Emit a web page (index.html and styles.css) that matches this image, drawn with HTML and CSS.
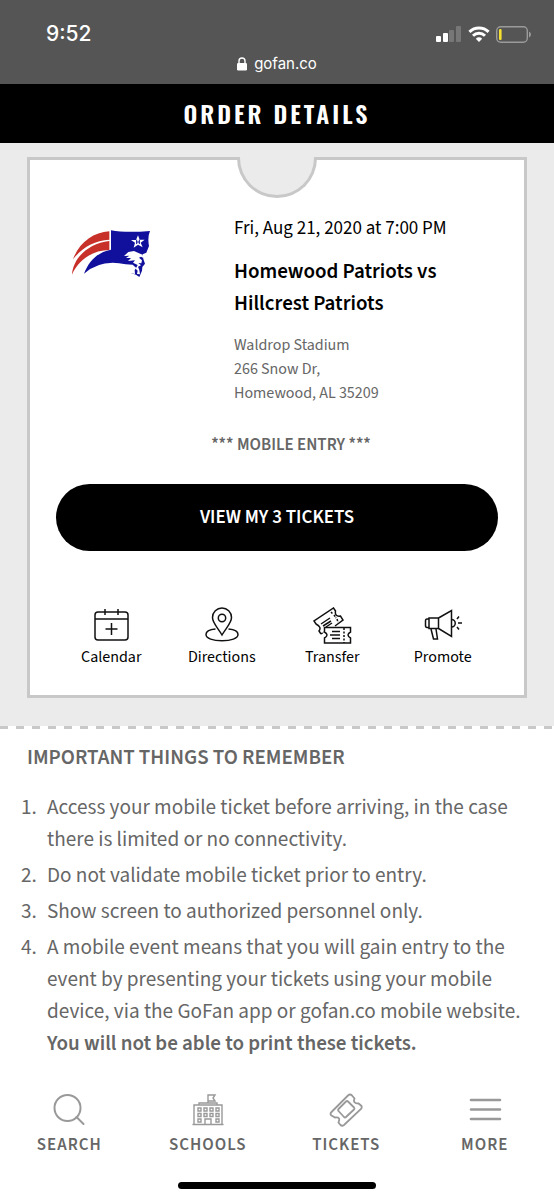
FILE: index.html
```html
<!doctype html>
<html lang="en">

<head>
  <meta charset="UTF-8">
  <meta name="viewport" content="width=device-width, initial-scale=1">
  <title>Order Details</title>
  <link rel="stylesheet" href="styles.css">
</head>

<body>

  <div class="browser">
    <div class="status">
      <span class="time">9:52</span>
      <div class="signals">
        <svg width="26" height="16" viewBox="0 0 26 16">
          <rect x="0" y="10" width="5" height="6" rx="1" fill="#fff"/>
          <rect x="7" y="7" width="5" height="9" rx="1" fill="#fff"/>
          <rect x="13" y="4" width="5" height="12" rx="1" fill="#777"/>
          <rect x="20" y="0" width="5" height="16" rx="1" fill="#777"/>
        </svg>
        <svg width="22" height="16" viewBox="0 0 22 16" fill="none" stroke="#fff" stroke-width="3">
          <path d="M1.4 5.9a13.8 13.8 0 0 1 19.2 0"/>
          <path d="M5 9.8a8.6 8.6 0 0 1 12 0"/>
          <path d="M11 16l-3.2-3.3a4.7 4.7 0 0 1 6.4 0z" fill="#fff" stroke="none"/>
        </svg>
        <svg width="35" height="17" viewBox="0 0 35 17">
          <rect x="0.7" y="0.7" width="30.6" height="15.6" rx="4" fill="none" stroke="#9b9b9b" stroke-width="1.4"/>
          <rect x="3" y="3" width="2.6" height="11" rx="1" fill="#f5e030"/>
          <path d="M33 5.500q2 1 2 3t-2 3z" fill="#9b9b9b"/>
        </svg>
      </div>
    </div>
    <div class="address-bar">
      <svg width="10" height="14" viewBox="0 0 10 14">
        <rect x="0" y="6" width="10" height="7.500" rx="1.300" fill="#fff"/>
        <path d="M2 7V4a3 3 0 0 1 6 0v3" fill="none" stroke="#fff" stroke-width="1.400"/>
      </svg>
      <span>gofan.co</span>
    </div>
  </div>

  <header class="page-title">
    <h1>ORDER DETAILS</h1>
  </header>

  <main>
    <section class="order">
      <div class="card">
        <div class="notch"></div>

        <div class="event">
          <!-- team logo -->
          <svg class="logo" width="80" height="50" viewBox="36 41 240 150">
            <path d="M42 132C60 82 102 51 151 48V73C105 76 70 96 42 132z" fill="#c8302a"/>
            <path d="M39 178C42 128 88 84 151 77V104C101 104 58 134 39 178z" fill="#c8302a"/>
            <path d="M156 45Q200 53 273 47Q265 65 270 92L262 112L251 117L253 131L258 145L250 155L249 166L241 185L231 178L216 173L223 160L200 147Q126 130 75 175C92 132 119 110 156 103z" fill="#10109c"/>
            <path d="M195 122L208 110L225 107L240 114L251 118L253 128L246 124L240 127L249 135L247 144L238 143L246 150L237 154L241 164L243 177L234 176L236 166L230 160L236 149L222 142L228 135L207 137L216 128L201 128L211 121z" fill="#fff"/>
            <path d="M200 147L221 148L232 158L227 164L228 176L210 172L208 155z" fill="#fff"/>
            <path d="M237 60l5 13 15 0-12 9 6 14-14-8-13 9 4-15-12-8h15z" fill="#fff"/>
            <path d="M233 73v13M241 73v13M233 80h8" stroke="#10109c" stroke-width="3"/>
          </svg>
          <div class="details">
            <p class="date">Fri, Aug 21, 2020 at 7:00 PM</p>
            <h2>Homewood Patriots vs Hillcrest Patriots</h2>
            <address>Waldrop Stadium<br>266 Snow Dr,<br>Homewood, AL 35209</address>
          </div>
        </div>

        <p class="entry">*** MOBILE ENTRY ***</p>

        <button type="button" class="view-tickets">VIEW MY 3 TICKETS</button>

        <div class="actions">
          <a href="#">
            <svg width="36" height="38" viewBox="-1 0 36 38">
              <rect x="1" y="5" width="33" height="28" rx="3"/>
              <path d="M1 12h33M11 2v6M24 2v6M17.500 16v12M11.500 22h12"/>
            </svg>
            <span>Calendar</span>
          </a>
          <a href="#">
            <svg width="36" height="38" viewBox="0 0 36 38">
              <path d="M18 28C14 21 8.500 16 8.500 10.500a9.500 9.500 0 0 1 19 0C27.500 16 22 21 18 28z"/>
              <circle cx="18" cy="11" r="3.700"/>
              <path d="M11.500 22C6 22.500 2 24.500 2 27.500c0 4 7 6.200 16 6.200s16-2.200 16-6.200c0-3-4-5-9.500-5.500"/>
            </svg>
            <span>Directions</span>
          </a>
          <a href="#">
            <svg width="40" height="38" viewBox="0 0 40 38">
              <path d="M9 27L7 24q3-4-3-7l-2-3L21.500 1l2 3q-1 6 5 5l2.500 4-8 6"/>
              <path d="M9 27l3-2M19 5l2 2M22 8l2 3M25 12l1 3" stroke-dasharray="2 1"/>
              <path d="M9 17l9-6M11 19l8-5M14 20l6-4"/>
              <path d="M12.500 20.500h26v4.500q-5 3 0 6v5h-26v-5q5-3 0-6z"/>
              <path d="M32 21v15" stroke-dasharray="2 1.500"/>
              <path d="M20 24.500h8M18 28h10M20 31.500h8"/>
            </svg>
            <span>Transfer</span>
          </a>
          <a href="#">
            <svg width="40" height="38" viewBox="0 0 40 38">
              <path d="M6 11h9.500v10.500H6zM6 12H4Q2.500 12 2.500 14v4.500q0 2 1.500 2H6M15.500 11L28.500 3.500V29.500L15.500 21.500z"/>
              <path d="M8 22l2.500 10h4L13 22M28.500 12.500a3.700 3.700 0 0 1 0 7.500"/>
              <path d="M34 12l2-2.500M35 16h4M34 20l2 2.500"/>
            </svg>
            <span>Promote</span>
          </a>
        </div>
      </div>
    </section>

    <section class="remember">
      <h3>IMPORTANT THINGS TO REMEMBER</h3>
      <ol>
        <li>Access your mobile ticket before arriving, in the case there is limited or no connectivity.</li>
        <li>Do not validate mobile ticket prior to entry.</li>
        <li>Show screen to authorized personnel only.</li>
        <li>A mobile event means that you will gain entry to the event by presenting your tickets using your mobile device, via the GoFan app or gofan.co mobile website. <b>You will not be able to print these tickets.</b></li>
      </ol>
    </section>
  </main>

  <nav class="tabs">
    <a href="#">
      <svg width="34" height="34" viewBox="0 0 34 34" stroke-width="2">
        <circle cx="15.500" cy="15" r="13"/>
        <path d="M24.500 24l7 7"/>
      </svg>
      <span>SEARCH</span>
    </a>
    <a href="#">
      <svg width="34" height="34" viewBox="0 0 34 34" stroke-width="1.400">
        <path d="M2 31.500h30M3 31V12h28v19M8 12v-2h18v2M17 10V2h7l-2 3 2 3h-7M14 31v-5h6v5"/>
        <path d="M7 15h3v3H7zM13 15h3v3h-3zM19 15h3v3h-3zM25 15h3v3h-3zM7 20.500h3v3H7zM13 20.500h3v3h-3zM19 20.500h3v3h-3zM25 20.500h3v3h-3zM7 26h3v3H7zM25 26h3v3h-3z"/>
      </svg>
      <span>SCHOOLS</span>
    </a>
    <a href="#">
      <svg width="34" height="34" viewBox="0 0 34 34" stroke-width="1.800">
        <path d="M19 2.500q2-2 4 0l2.500 3q-2 5 4 5l2.500 2q1.500 1.500 0 3.500L15 32q-2 1.500-3.500 0l-2-2.500q2.500-6-3.500-5l-3.500-2q-2-1.500 0-3.500z"/>
        <path d="M19 8.500q-1-1-2 0l-7.500 7.500q-1 1 0 2l5.500 6q1 1 2 0l8-7.500q1-1 0-2z"/>
      </svg>
      <span>TICKETS</span>
    </a>
    <a href="#">
      <svg width="34" height="34" viewBox="0 0 34 34" stroke-width="2.600">
        <path d="M3 7h29M3 16.500h29M3 26h29"/>
      </svg>
      <span>MORE</span>
    </a>
  </nav>
  <div class="home-bar"></div>

</body>

</html>
```
FILE: styles.css
```css
* {
  margin: 0;
  padding: 0;
  box-sizing: border-box;
}

body {
  min-height: 100vh;
  background: #fff;
  color: #000;
  font-family: "Source Sans Pro", "Source Sans 3", "Noto Sans CJK SC", sans-serif;
}

a {
  color: inherit;
  text-decoration: none;
}

svg {
  display: block;
}

/* browser bar */
.browser {
  height: 84px;
  background: #555;
  color: #fff;
  font-family: Inter, sans-serif;
}

.status {
  display: flex;
  justify-content: space-between;
  align-items: center;
  padding: 20px 23px 0 46px;
  line-height: 28px;
}

.time {
  font-size: 21px;
  font-weight: 500;
}

.signals {
  display: flex;
  align-items: center;
  gap: 6px;
}

.address-bar {
  display: flex;
  justify-content: center;
  align-items: center;
  gap: 7px;
  padding-top: 4px;
  font-size: 15px;
  line-height: 24px;
}

.page-title {
  background: #000;
  color: #fff;
  text-align: center;
}

.page-title h1 {
  font-family: Oswald, "Liberation Sans Narrow", Roboto, sans-serif;
  font-size: 24px;
  font-weight: 600;
  line-height: 59px;
  letter-spacing: 3px;
}

/* order card */
.order {
  padding: 14px 27px 28px;
  background: #ebebeb;
}

.card {
  position: relative;
  padding: 57px 26px 26px;
  background: #fff;
  border: 3px solid #c8c8c8;
}

.notch {
  position: absolute;
  top: -3px;
  left: 50%;
  width: 80px;
  height: 41px;
  margin-left: -40px;
  background: #ebebeb;
  border: 3px solid #c8c8c8;
  border-top: 0;
  border-radius: 0 0 40px 40px;
}

.event {
  display: grid;
  grid-template-columns: 110px 1fr;
  gap: 68px;
}

.logo {
  margin: 12px auto 0;
}

.date {
  font-size: 19px;
  line-height: 24px;
}

.details h2 {
  margin: 14px 0;
  font-size: 21px;
  font-weight: 600;
  line-height: 32px;
}

.details address {
  color: #666;
  font-size: 16px;
  font-style: normal;
  line-height: 24px;
}

.entry {
  padding-left: 28px;
  margin: 28px 0 27px;
  color: #666;
  font-size: 17px;
  font-weight: 600;
  line-height: 24px;
  text-align: center;
}

.view-tickets {
  width: 100%;
  height: 67px;
  border: 0;
  border-radius: 34px;
  background: #000;
  color: #fff;
  font-family: inherit;
  font-size: 19px;
  font-weight: 600;
  cursor: pointer;
}

.actions {
  display: grid;
  grid-template-columns: repeat(4, 1fr);
  margin-top: 56px;
  font-size: 16px;
  line-height: 24px;
}

.actions a,
.tabs a {
  display: flex;
  flex-direction: column;
  align-items: center;
}

.actions svg {
  fill: none;
  stroke: #111;
  stroke-width: 1.5;
}

/* reminders */
.remember {
  color: #666;
  background: repeating-linear-gradient(to right, #c8c8c8 0 8px, #fff 8px 16px) 0 0 / 100% 3px no-repeat;
  padding: 15px 27px 0;
}

.remember h3 {
  font-size: 21px;
  font-weight: 600;
  line-height: 32px;
}

.remember ol {
  margin: 17px -5px 0 0;
  padding-left: 14px;
  font-family: "Noto Sans CJK SC", sans-serif;
  font-size: 19px;
  line-height: 32px;
}

.remember li {
  margin-bottom: 4px;
  padding-left: 6px;
}

.remember b {
  font-family: "Source Sans Pro", "Source Sans 3", sans-serif;
  font-size: 21px;
  font-weight: 600;
}

/* bottom tabs */
.tabs {
  display: grid;
  grid-template-columns: repeat(4, 1fr);
  padding-top: 30px;
  color: #666;
  font-size: 17px;
  font-weight: 600;
  line-height: 24px;
  letter-spacing: 1px;
}

.tabs a {
  gap: 6px;
}

.tabs svg {
  fill: none;
  stroke: #999;
  stroke-linecap: round;
}

.home-bar {
  width: 198px;
  height: 7px;
  margin: 25px auto 10px;
  border-radius: 4px;
  background: #000;
}
```
